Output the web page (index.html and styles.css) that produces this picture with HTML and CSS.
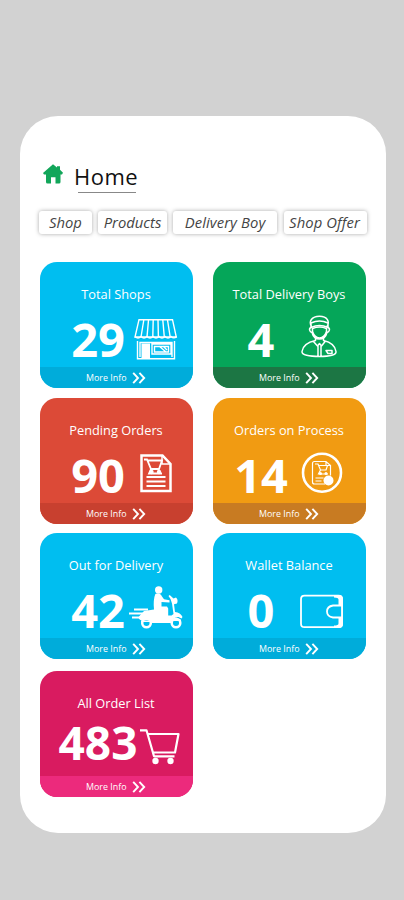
FILE: index.html
```html
<!DOCTYPE html>
<html lang="en">
<head>
<meta charset="utf-8">
<title>Home</title>
<link rel="stylesheet" href="styles.css">
</head>
<body>
<svg class="defs" width="0" height="0" aria-hidden="true">
  <symbol id="more" viewBox="0 0 14 12"><path d="M1.2 .8 6 6l-4.8 5.2M7.4.8 12.2 6l-4.8 5.2" fill="none" stroke="#fff" stroke-width="1.9"/></symbol>
</svg>
<main class="panel">
  <header class="head">
    <svg class="house" viewBox="0 0 20 20"><path d="M10 .3 14 3.400V2.200h3v3.600l3 2.900-1 1.900h-1.500V18q0 1.500-1.500 1.500h-3.500v-6.300h-4.500v6.300H4.500Q3 19.500 3 18v-7.400H1L0 8.900z" fill="#12a65a"/></svg>
    <h1 class="title">Home</h1>
  </header>
  <nav class="tabs">
    <a class="tab tab-shop">Shop</a>
    <a class="tab tab-products">Products</a>
    <a class="tab tab-boy">Delivery Boy</a>
    <a class="tab tab-offer">Shop Offer</a>
  </nav>
  <section class="grid">
    <article class="card blue">
      <h2 class="label">Total Shops</h2>
      <div class="row"><span class="num">29</span>
        <svg class="icon" viewBox="128 312 56 50"><g fill="none" stroke="#fff" stroke-width="1.400">
          <path d="M139 319.700h33.500l3.800 17.300h-41.300zM143.800 320l-2.800 17M148.500 320l-1.500 17M153.200 320l-.4 17M158 320l.4 17M162.800 320l1.500 17M167.500 320l2.700 17"/>
          <path d="M135 336.500q3 2.800 6 0q3 2.800 6 0q3 2.800 6 0q3 2.800 6 0q3 2.800 6 0q3 2.800 6 0q3 2.800 5.500 0"/>
          <path d="M137.500 341v17.700h37V341M140 357v-14.500h32v14.500M152 344h19v10h-19zM154.500 346.500h14v5.500h-14zM159 346l7 6M163 346l4 4"/></g><path d="M141.500 343.500h8.500v14.500h-8.500z" fill="#fff"/></svg>
      </div>
      <a class="more">More Info <svg><use href="#more"/></svg></a>
    </article>
    <article class="card green right">
      <h2 class="label">Total Delivery Boys</h2>
      <div class="row"><span class="num">4</span>
        <svg class="icon" viewBox="293 312 56 50"><g fill="none" stroke="#fff" stroke-width="1.500" stroke-linejoin="round">
          <path d="M311.500 326.500c-3-5 0-10.300 8-10.300s10.500 5.500 7.500 10.300M311 323q8.500-4 17 0v4.500q-8.500-4-17 0z"/>
          <path d="M311 327.500c-2.500 1-1.500 4.500 1 5 1 4 4 6.500 7.500 6.500s6.500-2.500 7.500-6.500c2.500-.5 3.500-4 1-5M312.500 328.500q7-3 14 0v3q-2 6-7 6.500-5-.5-7-6.500z"/>
          <path d="M315.500 338v2.500c-7 1.500-12.500 4-13.500 11-.4 3.500 7 5 17.500 5s17-1.500 16.500-5c-1-7-6-9.500-12.500-11V338M313 341l4.500 5 2-2.500 2 2.500 4-5M318 346v10M321 346v10"/>
          <path d="M326 350.500h6v3h-4z" stroke-width="1.500"/></g></svg>
      </div>
      <a class="more">More Info <svg><use href="#more"/></svg></a>
    </article>
    <article class="card red">
      <h2 class="label">Pending Orders</h2>
      <div class="row"><span class="num">90</span>
        <svg class="icon" viewBox="128 448 56 50"><g fill="none" stroke="#fff" stroke-width="2.500">
          <path d="M141.500 455.500h21l8 8.500v27h-29z"/><path d="M162 455.500v8.500h8.500" stroke-width="1.500"/>
          <path d="M144 459.500h3l4 9.500h8l3-8.500h-14.500M151 469l-2 4.500h13" stroke-width="1.800"/>
          <path d="M146.500 477h19M146.500 481.500h19M146.500 486h19" stroke-width="2.200"/></g><circle cx="151.500" cy="472" r="2.200" fill="#fff"/><circle cx="159" cy="472" r="2.200" fill="#fff"/></svg>
      </div>
      <a class="more">More Info <svg><use href="#more"/></svg></a>
    </article>
    <article class="card orange right">
      <h2 class="label">Orders on Process</h2>
      <div class="row"><span class="num">14</span>
        <svg class="icon" viewBox="293 448 56 50"><g fill="none" stroke="#fff" stroke-width="1.200">
          <circle cx="322" cy="472.700" r="19" stroke-width="2.600"/>
          <path d="M325 484h-10.500q-2 0-2-2v-18.500q0-2 2-2h11.500l4.500 4v10M326 461.500v4h4.500M315 464h3l2.500 6h5.500l1.500-4.500h-8.500M320.500 470l-2 4h9.500M315.500 478h8M315.500 481h6"/></g>
          <circle cx="328.500" cy="480.500" r="5" fill="#fff"/><g fill="#fff"><circle cx="320.500" cy="473.500" r="1.500"/><circle cx="326" cy="473.500" r="1.500"/></g></svg>
      </div>
      <a class="more">More Info <svg><use href="#more"/></svg></a>
    </article>
    <article class="card blue short">
      <h2 class="label">Out for Delivery</h2>
      <div class="row"><span class="num">42</span>
        <svg class="icon" viewBox="128 583 56 50"><g fill="#fff">
          <circle cx="158.700" cy="590" r="3.700"/>
          <path d="M155.500 594c3-1 5.500 0 6.500 2.500l2 2.800 5.500 1v2.200l-8-.5v4.500h5.500l1.200 2v7h3.300l2-1.500-1.500-10.500-1.500-4.500-2-3 1.200-1 3.800 3.500 2.500-1q2.500 2 1 6l-3 .8 1 7.700q5.500.5 7.500 5l-1 1.500-3-1.500q-5-.5-7.500 6h-27.500l-1-2.500q-5-1-3.500-4l5-5.500 10-1.500q-1-10 1.500-16z"/>
          <path d="M134 608.500h14v2h-14zM129 612.500h17v2h-17zM132 616.500h12v2h-12z"/></g>
          <g fill="#00bef0" stroke="#fff" stroke-width="2.500"><circle cx="146.500" cy="623" r="4.300"/><circle cx="176" cy="623" r="4.300"/></g><path d="M141 620.500h11v1.500h-11zM171 619.500h10v1.500h-10z" fill="#fff"/></svg>
      </div>
      <a class="more">More Info <svg><use href="#more"/></svg></a>
    </article>
    <article class="card blue right short">
      <h2 class="label">Wallet Balance</h2>
      <div class="row"><span class="num">0</span>
        <svg class="icon" viewBox="293 583 56 50"><path d="M304.500 595.700h34q3.500 0 3.500 3.500v24.500q0 3.500-3.500 3.500h-34q-3.500 0-3.500-3.500v-24.500q0-3.500 3.500-3.500z" fill="none" stroke="#fff" stroke-width="1.800"/><path d="M334 595h5q4 0 4 4v7h-4.500v-6.500q0-2-4.500-2zM334 628h5q4 0 4-4v-7h-4.500v6.500q0 2-4.500 2z" fill="#fff"/><path d="M342 605.500h-9q-6 1-6 6t6 6h9z" fill="#00bef0" stroke="#fff" stroke-width="1.800"/></svg>
      </div>
      <a class="more">More Info <svg><use href="#more"/></svg></a>
    </article>
    <article class="card pink">
      <h2 class="label">All Order List</h2>
      <div class="row"><span class="num">483</span>
        <svg class="icon" viewBox="128 716 56 50"><path d="M140 730.300h6.500l7.500 26h20.500M148.500 734h30l-3.500 18.500h-22" fill="none" stroke="#fff" stroke-width="2.200" stroke-linejoin="round"/><circle cx="155.500" cy="761" r="3.200" fill="#fff"/><circle cx="170.500" cy="761" r="3.200" fill="#fff"/></svg>
      </div>
      <a class="more">More Info <svg><use href="#more"/></svg></a>
    </article>
  </section>
</main>
</body>
</html>
```
FILE: styles.css
```css
* { box-sizing: border-box; }
body { margin: 0; height: 900px; padding: 116px 18.5px 0 20px; background: #d2d2d2; font-family: "Open Sans", "Noto Sans", sans-serif; overflow: hidden; }
.defs { position: absolute; }
.panel { height: 717px; padding: 44px 0 0 19px; background: #fff; border-radius: 38px; }
.head { display: flex; height: 34px; }
.house { width: 20px; height: 20px; margin: 4px 11.5px 0 3.500px; }
.title { position: relative; margin: 0; font-size: 22px; line-height: 32px; font-weight: 400; letter-spacing: .5px; color: #111; }
.title::after { content: ""; position: absolute; left: 4px; width: 58px; top: 32px; height: 1px; background: #888; }
.tabs { display: flex; margin-top: 17px; height: 23px; }
.tab { height: 23px; border-radius: 3px; background: #fff; box-shadow: 0 0 4px rgba(0,0,0,.34); font-size: 14.800px; line-height: 23px; font-style: italic; text-align: center; color: #444; white-space: nowrap; }
.tab-shop { width: 53px; }
.tab-products { width: 69px; margin-left: 6px; }
.tab-boy { width: 104px; margin-left: 6px; letter-spacing: .1px; }
.tab-offer { width: 83px; margin-left: 7px; padding-right: 2px; letter-spacing: .1px; }
.grid { display: grid; grid-template-columns: 153px 153px; grid-template-rows: 126px 126px 126px 126px; gap: 10px 20px; margin: 28px 0 0 1px; }
.card { display: flex; flex-direction: column; height: 126px; border-radius: 17px; overflow: hidden; color: #fff; }
.blue { background: #00bef0; }
.green { background: #05a659; }
.red { background: #dc4a37; }
.orange { background: #f19b12; }
.pink { background: #d91b60; }
.short { margin-top: -.7px; }
.pink { margin-top: 1px; }
.label { margin: 24px 0 0; height: 19px; padding-right: 1px; font-size: 12.800px; line-height: 17px; font-weight: 400; text-align: center; white-space: nowrap; }
.row { display: flex; height: 62px; padding-left: 18px; }
.right .row { padding-left: 8px; }
.num { width: 80px; font-size: 47px; line-height: 68px; font-weight: 700; text-align: center; }
.icon { flex: none; width: 56px; height: 50px; margin: 7px 0 0 -10px; }
.right .icon { margin-left: -8px; }
.pink .num { font-size: 46px; line-height: 57px; }
.pink .icon { margin-top: 2px; }
.more { display: flex; flex: 1; align-items: center; gap: 6px; padding-left: 46px; font-size: 8.900px; line-height: 20px; background: #00acda; }
.more svg { width: 14px; height: 12px; }
.green .more { background: #1c7644; }
.red .more { background: #c8402f; }
.orange .more { background: #c87b22; }
.pink .more { background: #ec2a7c; }
```
